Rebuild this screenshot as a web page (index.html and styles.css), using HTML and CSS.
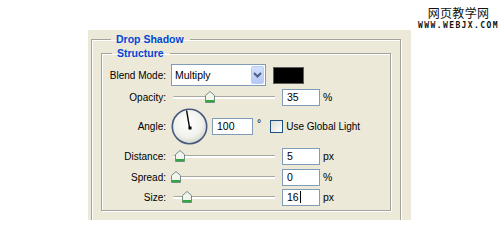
FILE: index.html
```html
<!DOCTYPE html>
<html lang="en">
<head>
  <meta charset="UTF-8">
  <title>Drop Shadow</title>
  <link rel="stylesheet" href="styles.css">
</head>
<body>
  <div class="top">
    <div class="mark">
      <div class="mark-cn">网页教学网</div>
      <div class="mark-en">WWW.WEBJX.COM</div>
    </div>
  </div>

  <div class="panel">
    <fieldset class="group outer">
      <legend>Drop Shadow</legend>
      <fieldset class="group inner">
        <legend>Structure</legend>

        <div class="row row-blend">
          <label class="label">Blend Mode:</label>
          <div class="select">
            <span class="select-text">Multiply</span>
            <span class="select-btn">
              <svg width="9" height="6" viewBox="0 0 9 6"><path d="M1 1 L4.5 4.5 L8 1" fill="none" stroke="#4d6185" stroke-width="2"/></svg>
            </span>
          </div>
          <div class="swatch"></div>
        </div>

        <div class="row row-slider">
          <label class="label">Opacity:</label>
          <div class="slider">
            <div class="track"></div>
            <svg class="thumb" style="left: 34px" width="10" height="12" viewBox="0 0 10 12"><path d="M0.5 4.5 L5 0.5 L9.5 4.5 V11.5 H0.5 Z" fill="#f4f4ef" stroke="#6f8f86"/><rect x="1" y="9" width="8" height="2" fill="#2fa83c"/></svg>
          </div>
          <input class="field" type="text" value="35">
          <span class="unit">%</span>
        </div>

        <div class="row row-angle">
          <label class="label">Angle:</label>
          <svg class="dial" width="37" height="37" viewBox="0 0 37 37">
            <defs>
              <radialGradient id="dialFill" cx="0.45" cy="0.4" r="0.6">
                <stop offset="0" stop-color="#ffffff"/>
                <stop offset="0.7" stop-color="#f1f1ec"/>
                <stop offset="1" stop-color="#d6d6d0"/>
              </radialGradient>
            </defs>
            <circle cx="18.5" cy="18.5" r="17.2" fill="url(#dialFill)" stroke="#47587e" stroke-width="1.6"/>
            <line x1="18.5" y1="19.5" x2="15.6" y2="2.5" stroke="#000" stroke-width="1.4"/>
            <rect x="17.5" y="18.5" width="3" height="3" fill="#000"/>
          </svg>
          <input class="field field-angle" type="text" value="100">
          <span class="unit unit-deg">°</span>
          <span class="check"></span>
          <span class="check-label">Use Global Light</span>
        </div>

        <div class="row row-slider row-distance">
          <label class="label">Distance:</label>
          <div class="slider">
            <div class="track"></div>
            <svg class="thumb" style="left: 4px" width="10" height="12" viewBox="0 0 10 12"><path d="M0.5 4.5 L5 0.5 L9.5 4.5 V11.5 H0.5 Z" fill="#f4f4ef" stroke="#6f8f86"/><rect x="1" y="9" width="8" height="2" fill="#2fa83c"/></svg>
          </div>
          <input class="field" type="text" value="5">
          <span class="unit">px</span>
        </div>

        <div class="row row-slider">
          <label class="label">Spread:</label>
          <div class="slider">
            <div class="track"></div>
            <svg class="thumb" style="left: 0px" width="10" height="12" viewBox="0 0 10 12"><path d="M0.5 4.5 L5 0.5 L9.5 4.5 V11.5 H0.5 Z" fill="#f4f4ef" stroke="#6f8f86"/><rect x="1" y="9" width="8" height="2" fill="#2fa83c"/></svg>
          </div>
          <input class="field" type="text" value="0">
          <span class="unit">%</span>
        </div>

        <div class="row row-slider">
          <label class="label">Size:</label>
          <div class="slider">
            <div class="track"></div>
            <svg class="thumb" style="left: 11px" width="10" height="12" viewBox="0 0 10 12"><path d="M0.5 4.5 L5 0.5 L9.5 4.5 V11.5 H0.5 Z" fill="#f4f4ef" stroke="#6f8f86"/><rect x="1" y="9" width="8" height="2" fill="#2fa83c"/></svg>
          </div>
          <div class="field field-caret">16<span class="caret"></span></div>
          <span class="unit">px</span>
        </div>

      </fieldset>
    </fieldset>
  </div>
</body>
</html>
```

FILE: styles.css
```css
/* Page */
body {
  margin: 0;
  background: #fff;
  font-family: "Liberation Sans", Arial, sans-serif;
  font-size: 10px;
  color: #000;
}

/* Watermark in the top right corner */
.top {
  height: 30px;
  display: flex;
  justify-content: flex-end;
}

.mark {
  width: 83px;
  padding-top: 6px;
  text-align: center;
}

.mark-cn {
  font-family: "Noto Sans CJK SC", sans-serif;
  font-size: 12px;
  line-height: 14px;
  height: 14px;
  letter-spacing: 0.3px;
  color: #111;
}

.mark-en {
  font-family: "DejaVu Sans Mono", monospace;
  font-weight: bold;
  font-size: 8px;
  line-height: 9px;
  margin-top: 1px;
  letter-spacing: 1.4px;
  color: #111;
}

/* Dialog panel */
.panel {
  margin-left: 88px;
  width: 323px;
  height: 190px;
  background: #ece9d8;
  overflow: hidden;
  padding-top: 3px;
  box-sizing: border-box;
}

/* Etched group boxes */
.group {
  margin: 0;
  border: 1px solid #a3a29b;
  box-shadow: 1px 1px 0 #fff, inset 1px 1px 0 #fff;
  min-width: 0;
}

.group legend {
  font-weight: bold;
  font-size: 10.5px;
  line-height: 12px;
  color: #0046d5;
  padding: 0 6px 0 5px;
}

.outer {
  margin: 0 10px 0 3px;
  padding: 2px 9px 20px 9px;
}

.outer > legend {
  margin-left: 10px;
}

.inner {
  padding: 4px 0 3px 0;
}

.inner > legend {
  margin-left: 10px;
}

/* Rows of controls */
.row {
  display: flex;
  align-items: center;
  height: 20px;
}

.row-blend {
  height: 24px;
}

.row-angle {
  height: 38px;
}

.row-distance {
  height: 22px;
}

.label {
  width: 64px;
  margin-right: 5px;
  text-align: right;
  white-space: nowrap;
}

/* Blend mode dropdown */
.select {
  width: 95px;
  height: 22px;
  box-sizing: border-box;
  border: 1px solid #7f9db9;
  background: #fff;
  display: flex;
  align-items: center;
  justify-content: space-between;
  padding: 1px;
}

.select-text {
  padding-left: 2px;
  font-size: 10.5px;
}

.select-btn {
  width: 13px;
  height: 18px;
  background: linear-gradient(#d2e0fd, #b4c8f6);
  border: 1px solid #b9cdf5;
  border-radius: 2px;
  box-sizing: border-box;
  display: flex;
  align-items: center;
  justify-content: center;
}

.swatch {
  width: 31px;
  height: 17px;
  margin-left: 7px;
  box-sizing: border-box;
  border: 1px solid #5e5e5e;
  background: #000;
}

/* Sliders */
.slider {
  position: relative;
  width: 106px;
  height: 14px;
  margin-right: 5px;
}

.track {
  position: absolute;
  left: 2px;
  right: 2px;
  top: 6px;
  height: 2px;
  border-top: 1px solid #a9a89f;
  background: #fff;
  border-radius: 2px 0 0 2px;
}

.thumb {
  position: absolute;
  top: 1px;
}

/* Numeric fields */
.field {
  width: 38px;
  height: 17px;
  box-sizing: border-box;
  border: 1px solid #7f9db9;
  background: #fff;
  font-family: "Liberation Sans", Arial, sans-serif;
  font-size: 10.5px;
  padding: 0 0 0 4px;
  margin: 0;
  outline: none;
}

.field-caret {
  display: flex;
  align-items: center;
}

.caret {
  display: inline-block;
  width: 1px;
  height: 12px;
  background: #000;
  margin-left: 1px;
}

.field-angle {
  width: 41px;
  margin-left: 4px;
}

.unit {
  margin-left: 3px;
  font-size: 10.5px;
}

.unit-deg {
  margin-left: 4px;
  align-self: flex-start;
  margin-top: 10px;
}

/* Global light checkbox */
.check {
  width: 13px;
  height: 13px;
  box-sizing: border-box;
  border: 1px solid #1c5180;
  background: linear-gradient(135deg, #dcdcd6, #fff);
  margin-left: 9px;
  margin-right: 3px;
}

.check-label {
  font-size: 10px;
}
```
